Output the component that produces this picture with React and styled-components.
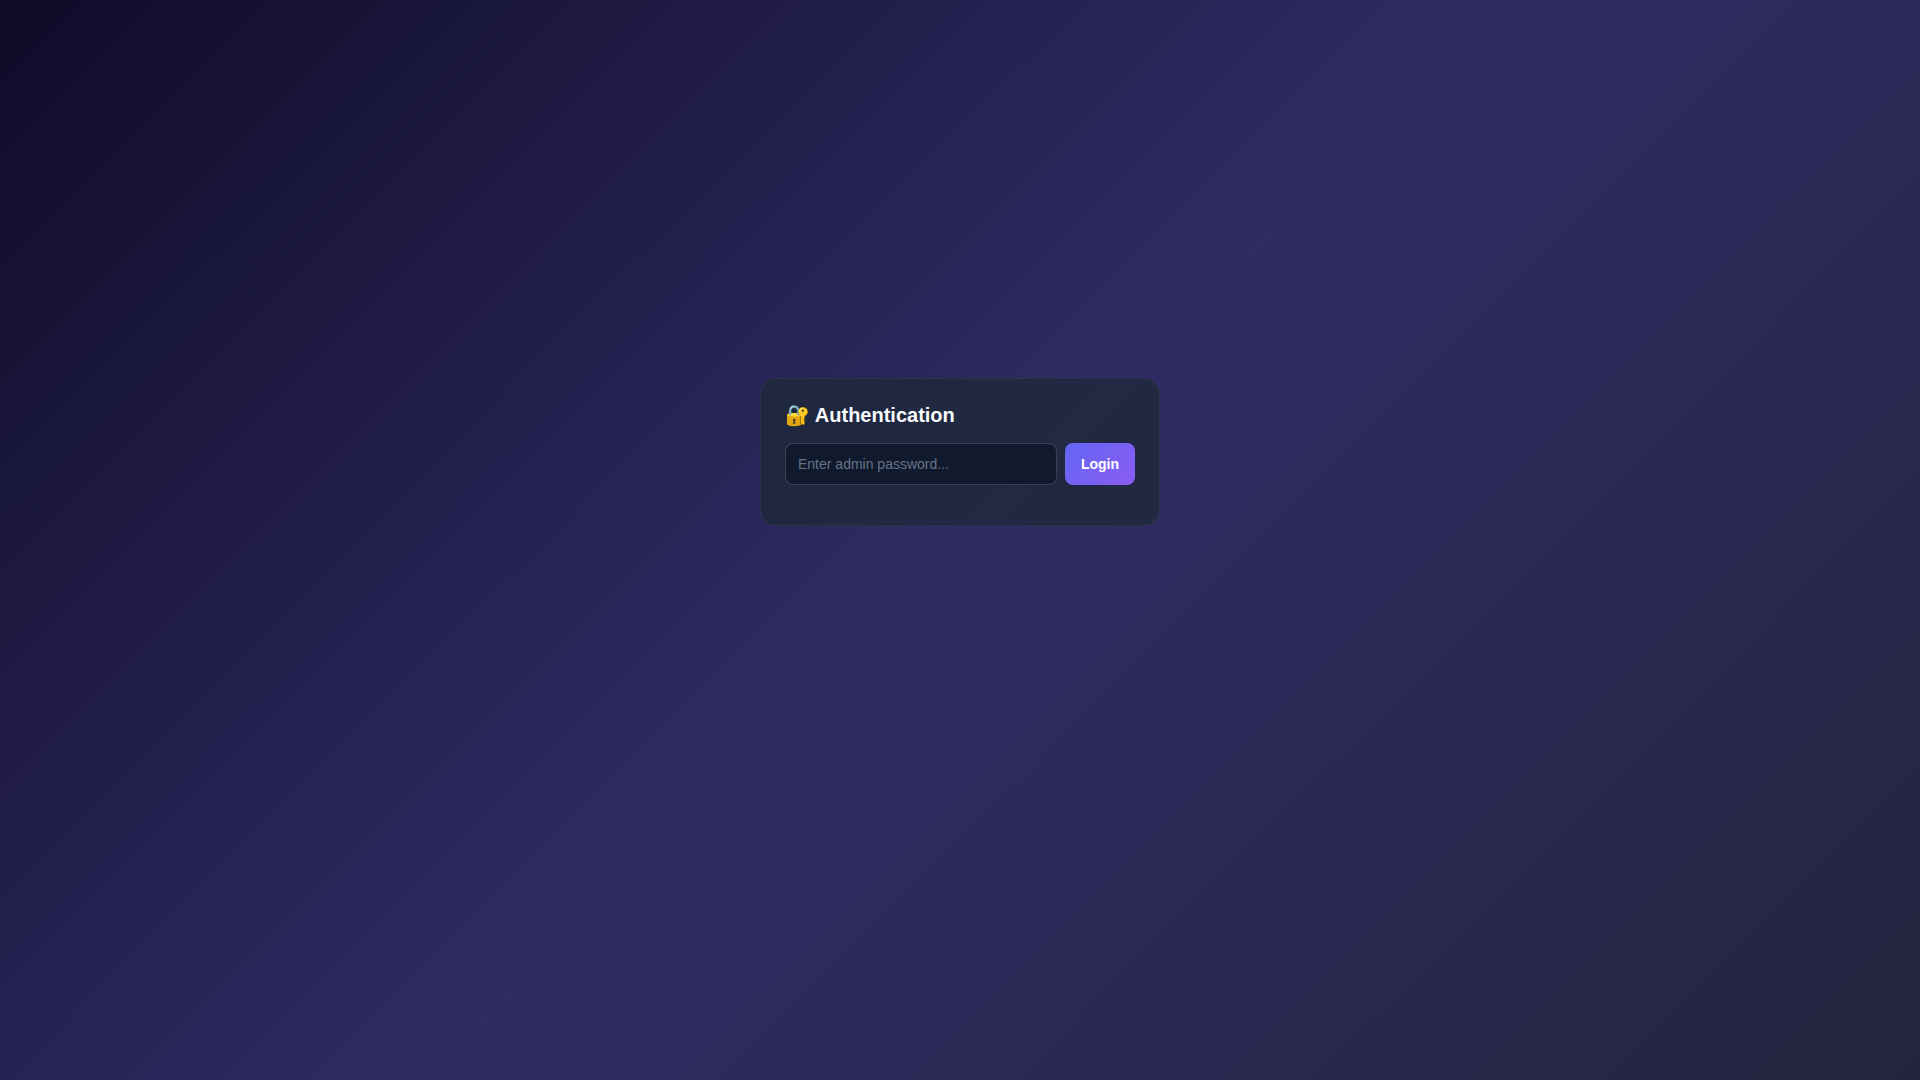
import React, { useState } from "react";
import styled, { createGlobalStyle } from "styled-components";

const GlobalStyle = createGlobalStyle`
  * { box-sizing: border-box; margin: 0; padding: 0; }
  body {
    min-height: 100vh;
    font-family: "Liberation Sans", Arial, sans-serif;
    color: #f8fafc;
    background: linear-gradient(135deg, #0f0c29, #302b63, #24243e);
  }
`;

const Page = styled.main`
  min-height: 100vh;
  padding: 35vh 24px 24px;
`;

const Card = styled.section`
  width: 100%;
  max-width: 400px;
  margin: 0 auto;
  padding: 24px;
  border: 1px solid rgba(255, 255, 255, 0.05);
  border-radius: 16px;
  background: rgba(30, 41, 59, 0.8);
`;

const Title = styled.h1`
  margin-bottom: 16px;
  font-size: 20px;
  line-height: 24px;
  font-weight: 700;
`;

const Form = styled.form`
  display: flex;
  gap: 8px;
`;

const PasswordInput = styled.input`
  flex: 1;
  min-width: 0;
  padding: 12px;
  border: 1px solid rgba(148, 163, 184, 0.3);
  border-radius: 8px;
  background: rgba(15, 23, 42, 0.9);
  color: #f8fafc;
  font: 14px "Liberation Sans", Arial, sans-serif;
  &::placeholder { color: #64748b; }
`;

const LoginButton = styled.button`
  padding: 12px 16px;
  border: 0;
  border-radius: 8px;
  background: linear-gradient(135deg, #6366f1, #8b5cf6);
  color: #fff;
  font: 700 14px "Liberation Sans", Arial, sans-serif;
  cursor: pointer;
`;

const Status = styled.p`
  min-height: 16px;
`;

export default function App() {
  const [password, setPassword] = useState("");
  return (
    <>
      <GlobalStyle />
      <Page>
        <Card>
          <Title>🔐 Authentication</Title>
          <Form onSubmit={(e) => e.preventDefault()}>
            <PasswordInput
              type="password"
              aria-label="Admin password"
              placeholder="Enter admin password..."
              value={password}
              onChange={(e) => setPassword(e.target.value)}
            />
            <LoginButton type="submit">Login</LoginButton>
          </Form>
          <Status role="status" />
        </Card>
      </Page>
    </>
  );
}
